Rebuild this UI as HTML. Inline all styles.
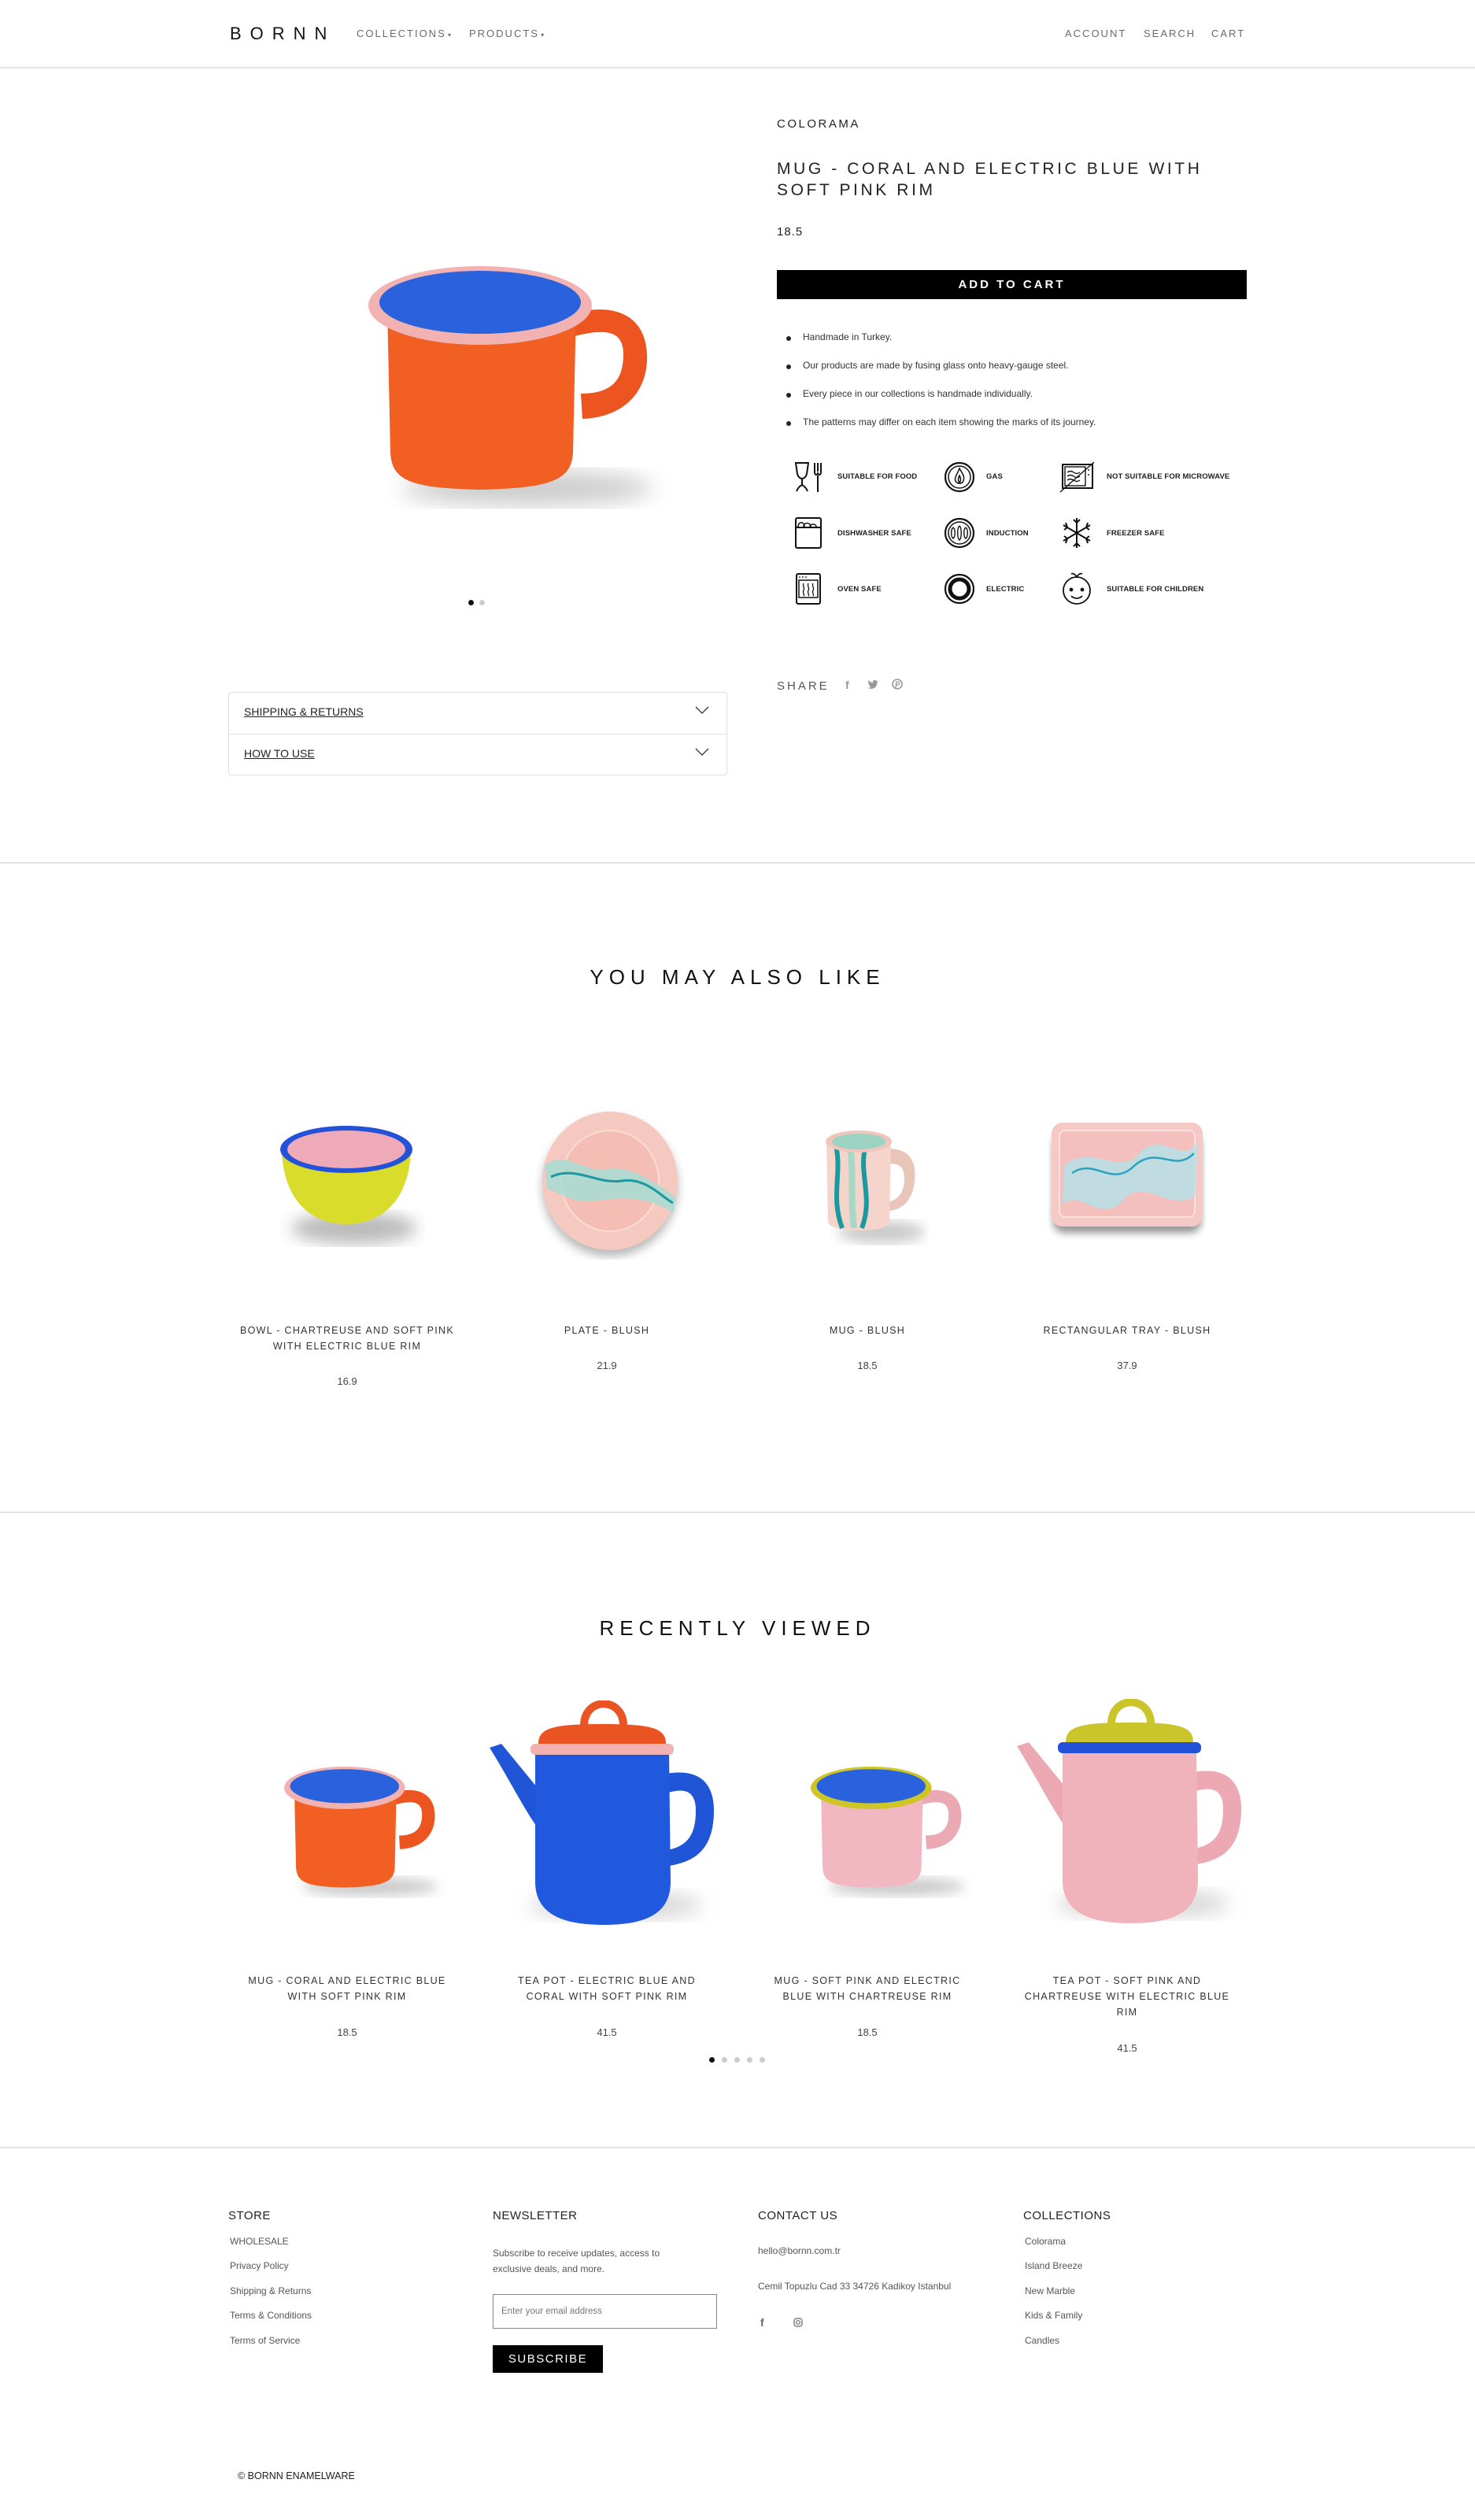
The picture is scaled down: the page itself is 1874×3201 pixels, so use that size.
<!DOCTYPE html>
<html><head><meta charset="utf-8">
<style>
*{margin:0;padding:0;box-sizing:border-box}
body{width:1874px;height:3201px;position:relative;background:#fff;font-family:"Liberation Sans",sans-serif;color:#1c1b1b;overflow:hidden}
.a{position:absolute}
.hd{font-size:13px;letter-spacing:2px;color:#6a6a6a}
.hr{position:absolute;left:0;width:1874px;height:2px;background:#e3e3e3}
.pt{position:absolute;font-size:12.5px;letter-spacing:1.3px;color:#333;text-align:center;line-height:20px}
.pp{position:absolute;font-size:13px;color:#444;text-align:center}
.fh{position:absolute;font-size:15px;color:#222;letter-spacing:.5px}
.fl{position:absolute;font-size:12px;color:#555}
.ic{position:absolute;font-size:9.5px;color:#222;font-weight:bold;letter-spacing:.1px}
.bl{position:absolute;font-size:12px;color:#333}
.bl:before{content:"";position:absolute;left:-21px;top:6px;width:6px;height:6px;border-radius:50%;background:#222}
</style></head><body>

<div class="a" style="left:292px;top:30px;font-size:22px;letter-spacing:11px;color:#111">BORNN</div>
<div class="a hd" style="left:453px;top:35px">COLLECTIONS<span style="font-size:8px;letter-spacing:0"> ▾</span></div>
<div class="a hd" style="left:596px;top:35px">PRODUCTS<span style="font-size:8px;letter-spacing:0"> ▾</span></div>
<div class="a hd" style="left:1353px;top:35px">ACCOUNT</div>
<div class="a hd" style="left:1453px;top:35px">SEARCH</div>
<div class="a hd" style="left:1539px;top:35px">CART</div>
<div class="hr" style="top:85px"></div>

<svg class="a" style="left:420px;top:320px" width="440" height="380" viewBox="0 0 440 380">
 <defs><filter id="bl"><feGaussianBlur stdDeviation="14"/></filter></defs>
 <ellipse cx="250" cy="300" rx="160" ry="22" fill="#999" opacity=".5" filter="url(#bl)"/>
 <path d="M300 80 C360 62 400 80 402 130 C404 175 375 210 320 212 L318 180 C360 180 372 160 372 130 C372 100 350 95 300 110Z" fill="#ec5420"/>
 <path d="M72 70 L312 70 L308 255 C306 290 280 300 190 302 C100 300 78 290 76 255Z" fill="#f15f22"/>
 <ellipse cx="190" cy="68" rx="142" ry="50" fill="#f3b2b2"/>
 <ellipse cx="190" cy="64" rx="128" ry="40" fill="#2a62dd"/>
</svg>
<div class="a" style="left:595px;top:762px;width:7px;height:7px;border-radius:50%;background:#111"></div>
<div class="a" style="left:609px;top:762px;width:7px;height:7px;border-radius:50%;background:#ccc"></div>

<div class="a" style="left:290px;top:879px;width:634px;height:106px;border:1px solid #e0e0e0;border-radius:4px"></div>
<div class="a" style="left:290px;top:932px;width:634px;height:1px;background:#e0e0e0"></div>
<div class="a" style="left:310px;top:896px;font-size:14px;text-decoration:underline;color:#222">SHIPPING &amp; RETURNS</div>
<div class="a" style="left:310px;top:949px;font-size:14px;text-decoration:underline;color:#222">HOW TO USE</div>
<svg class="a" style="left:883px;top:897px" width="18" height="10"><path d="M1 1 L9 9 L17 1" stroke="#333" fill="none" stroke-width="1.3"/></svg>
<svg class="a" style="left:883px;top:950px" width="18" height="10"><path d="M1 1 L9 9 L17 1" stroke="#333" fill="none" stroke-width="1.3"/></svg>

<div class="a" style="left:987px;top:149px;font-size:15px;letter-spacing:2.5px;color:#222">COLORAMA</div>
<div class="a" style="left:987px;top:201px;font-size:21px;letter-spacing:3.6px;line-height:27px;color:#222">MUG - CORAL AND ELECTRIC BLUE WITH<br>SOFT PINK RIM</div>
<div class="a" style="left:987px;top:286px;font-size:15px;letter-spacing:1px;color:#222">18.5</div>
<div class="a" style="left:987px;top:343px;width:597px;height:37px;background:#000;color:#fff;font-size:15px;letter-spacing:3px;text-align:center;line-height:37px;font-weight:bold">ADD TO CART</div>
<div class="bl" style="left:1020px;top:421px">Handmade in Turkey.</div>
<div class="bl" style="left:1020px;top:457px">Our products are made by fusing glass onto heavy-gauge steel.</div>
<div class="bl" style="left:1020px;top:493px">Every piece in our collections is handmade individually.</div>
<div class="bl" style="left:1020px;top:529px">The patterns may differ on each item showing the marks of its journey.</div>

<svg class="a" style="left:1008px;top:586px" width="42" height="40" viewBox="0 0 42 40" fill="none" stroke="#111" stroke-width="2"><path d="M3 2 H19 L17 16 C16 20 13 22 11 22 C9 22 6 20 5 16Z M11 22 V30 M4 38 C6 33 9 31 11 30 C13 31 16 33 18 38"/><path d="M27 2 V14 C27 18 31 18 31 14 M31 2 V13 M35 2 V14 C35 18 31 18 31 14 M31 18 V39"/></svg>
<div class="ic" style="left:1064px;top:600px">SUITABLE FOR FOOD</div>
<svg class="a" style="left:1199px;top:586px" width="40" height="40" viewBox="0 0 40 40" fill="none" stroke="#111" stroke-width="2.2"><circle cx="20" cy="20" r="18"/><circle cx="20" cy="20" r="14" stroke-width="1.5"/><path d="M20 9 C24 16 27 19 25 25 C23 29 17 29 15 25 C13 21 17 17 20 9Z M20 18 C22 22 22 25 20 27 C18 25 18 22 20 18Z" stroke-width="1.5"/></svg>
<div class="ic" style="left:1253px;top:600px">GAS</div>
<svg class="a" style="left:1346px;top:586px" width="46" height="40" viewBox="0 0 46 40" fill="none" stroke="#111" stroke-width="2"><rect x="4" y="4" width="38" height="30"/><rect x="7" y="7" width="26" height="24" stroke-width="1.4"/><path d="M10 14 q4 -3 8 0 t8 0 M10 19 q4 -3 8 0 t8 0 M10 24 q4 -3 8 0 t8 0 M37 10 v2 M37 16 v2 M1 39 L44 1" stroke-width="1.4"/></svg>
<div class="ic" style="left:1406px;top:600px">NOT SUITABLE FOR MICROWAVE</div>

<svg class="a" style="left:1008px;top:656px" width="40" height="42" viewBox="0 0 40 42" fill="none" stroke="#111" stroke-width="2"><rect x="3" y="2" width="32" height="38" rx="2"/><path d="M3 14 H35"/><path d="M6 13 C6 6 14 6 14 13 M13 13 C13 7 22 7 22 13 M21 13 C21 9 29 9 29 13" stroke-width="1.5"/></svg>
<div class="ic" style="left:1064px;top:672px">DISHWASHER SAFE</div>
<svg class="a" style="left:1199px;top:656px" width="40" height="42" viewBox="0 0 40 42" fill="none" stroke="#111" stroke-width="2.2"><circle cx="20" cy="21" r="18"/><circle cx="20" cy="21" r="14" stroke-width="1.5"/><path d="M12 14 c-3 2 -3 12 0 14 c3 -2 3 -12 0 -14 M20 12 c-3 2 -3 16 0 18 c3 -2 3 -16 0 -18 M28 14 c-3 2 -3 12 0 14 c3 -2 3 -12 0 -14" stroke-width="1.4"/></svg>
<div class="ic" style="left:1253px;top:672px">INDUCTION</div>
<svg class="a" style="left:1348px;top:656px" width="40" height="42" viewBox="0 0 40 42" fill="none" stroke="#111" stroke-width="2"><path d="M20 2 V40 M3 11 L37 31 M3 31 L37 11 M16 4 L20 8 L24 4 M16 38 L20 34 L24 38 M4 17 L8 14 L6 8 M36 25 L32 28 L34 34 M4 25 L8 28 L6 34 M36 17 L32 14 L34 8"/></svg>
<div class="ic" style="left:1406px;top:672px">FREEZER SAFE</div>

<svg class="a" style="left:1008px;top:727px" width="40" height="42" viewBox="0 0 40 42" fill="none" stroke="#111" stroke-width="2"><rect x="4" y="2" width="30" height="38" rx="2"/><rect x="7" y="10" width="24" height="22" stroke-width="1.5"/><path d="M7 6 h2 M11 6 h2 M15 6 h2 M13 14 c-2 3 2 6 0 9 c-2 3 2 5 0 7 M19 14 c-2 3 2 6 0 9 c-2 3 2 5 0 7 M25 14 c-2 3 2 6 0 9 c-2 3 2 5 0 7" stroke-width="1.3"/></svg>
<div class="ic" style="left:1064px;top:743px">OVEN SAFE</div>
<svg class="a" style="left:1199px;top:727px" width="40" height="42" viewBox="0 0 40 42"><circle cx="20" cy="21" r="18" fill="none" stroke="#111" stroke-width="2.2"/><circle cx="20" cy="21" r="12" fill="none" stroke="#111" stroke-width="5"/><circle cx="20" cy="21" r="6" fill="#fff"/></svg>
<div class="ic" style="left:1253px;top:743px">ELECTRIC</div>
<svg class="a" style="left:1346px;top:724px" width="44" height="46" viewBox="0 0 44 46" fill="none" stroke="#111" stroke-width="1.8"><circle cx="22" cy="26" r="17"/><path d="M22 9 C20 5 17 4 15 5 M22 9 C24 5 27 4 29 5 M15 33 C19 37 25 37 29 33"/><circle cx="15" cy="25" r="1.5" fill="#111"/><circle cx="29" cy="25" r="1.5" fill="#111"/></svg>
<div class="ic" style="left:1406px;top:743px">SUITABLE FOR CHILDREN</div>

<div class="a" style="left:987px;top:863px;font-size:15px;letter-spacing:3px;color:#555">SHARE</div>
<div class="a" style="left:1074px;top:862px;font-size:14px;color:#999;font-weight:bold">f</div>
<svg class="a" style="left:1102px;top:864px" width="14" height="12" viewBox="0 0 24 20"><path d="M23 2 c-1 1 -2 1 -3 1 c1 -1 2 -2 2 -3 c-1 1 -2 1 -3 1 c-3 -3 -8 -1 -7 4 c-4 0 -7 -2 -10 -5 c-1 3 0 5 2 7 c-1 0 -2 0 -2 -1 c0 3 2 5 4 5 c-1 0 -2 0 -2 0 c1 2 2 3 4 3 c-2 2 -5 3 -8 2 c10 6 22 0 21 -11 c1 -1 2 -2 2 -3z" fill="#999"/></svg>
<svg class="a" style="left:1133px;top:862px" width="14" height="14" viewBox="0 0 14 14"><circle cx="7" cy="7" r="6" fill="none" stroke="#999" stroke-width="1.6"/><path d="M6 4 L5 12" stroke="#999" stroke-width="1.4"/><circle cx="7.5" cy="6" r="2" fill="none" stroke="#999" stroke-width="1.3"/></svg>

<div class="hr" style="top:1095px"></div>

<div class="a" style="left:0;width:1874px;top:1226px;text-align:center;font-size:26px;letter-spacing:7px;color:#111">YOU MAY ALSO LIKE</div>

<svg class="a" style="left:340px;top:1420px" width="200" height="180" viewBox="0 0 200 180">
 <defs><filter id="b2"><feGaussianBlur stdDeviation="10"/></filter></defs>
 <ellipse cx="110" cy="140" rx="80" ry="20" fill="#777" opacity=".5" filter="url(#b2)"/>
 <path d="M18 40 C20 110 60 135 100 135 C140 135 180 110 182 40Z" fill="#d9dc2a"/>
 <ellipse cx="100" cy="40" rx="84" ry="30" fill="#2352d8"/>
 <ellipse cx="100" cy="40" rx="75" ry="24" fill="#eeaab8"/>
</svg>
<svg class="a" style="left:680px;top:1400px" width="190" height="200" viewBox="0 0 190 200">
 <defs><filter id="b3"><feGaussianBlur stdDeviation="6"/></filter></defs>
 <ellipse cx="95" cy="108" rx="86" ry="88" fill="#888" opacity=".6" filter="url(#b3)"/>
 <ellipse cx="95" cy="100" rx="86" ry="88" fill="#f6c9c0"/>
 <ellipse cx="95" cy="100" rx="62" ry="64" fill="#f4beb4" stroke="#f9ddd5" stroke-width="2"/>
 <path d="M12 80 C40 60 60 90 90 85 C120 80 150 100 178 120 L176 140 C140 120 110 120 80 125 C50 130 30 115 15 110Z" fill="#a6ddd4" opacity=".85"/>
 <path d="M20 95 C50 80 80 105 110 100 C140 95 160 120 175 128" stroke="#1a9aa0" stroke-width="3" fill="none"/>
</svg>
<svg class="a" style="left:1040px;top:1430px" width="140" height="160" viewBox="0 0 140 160">
 <defs><filter id="b4"><feGaussianBlur stdDeviation="8"/></filter></defs>
 <ellipse cx="80" cy="135" rx="55" ry="14" fill="#888" opacity=".45" filter="url(#b4)"/>
 <path d="M80 30 C115 25 125 45 122 70 C120 95 105 108 88 108 L88 96 C100 96 108 85 109 70 C110 50 100 45 80 50Z" fill="#e9c4b9"/>
 <path d="M10 20 L92 20 L90 122 C88 130 70 133 50 133 C30 133 14 130 12 122Z" fill="#f4d4cb"/>
 <path d="M22 25 C30 60 15 90 30 130 M60 25 C50 60 70 90 55 130" stroke="#1a9aa0" stroke-width="6" fill="none"/>
 <path d="M40 25 C45 60 40 90 45 130" stroke="#a7d8c6" stroke-width="8" fill="none"/>
 <ellipse cx="51" cy="20" rx="42" ry="14" fill="#f0c6bc"/>
 <ellipse cx="51" cy="20" rx="34" ry="10" fill="#9dd3c2"/>
</svg>
<svg class="a" style="left:1332px;top:1420px" width="200" height="160" viewBox="0 0 200 160">
 <defs><filter id="b5"><feGaussianBlur stdDeviation="5"/></filter></defs>
 <rect x="6" y="20" width="188" height="126" rx="14" fill="#666" opacity=".7" filter="url(#b5)"/>
 <rect x="4" y="6" width="192" height="132" rx="14" fill="#f5c9c6"/>
 <rect x="14" y="16" width="172" height="110" rx="8" fill="#f3c0bd" stroke="#fbe0dc" stroke-width="2"/>
 <path d="M20 60 C60 30 90 80 120 40 C150 20 170 60 190 30 L186 100 C150 120 120 70 90 110 C60 130 40 90 18 110Z" fill="#b6e1e6" opacity=".85"/>
 <path d="M30 70 C60 50 80 90 110 60 C140 35 160 70 185 45" stroke="#2aa2c0" stroke-width="2.5" fill="none"/>
</svg>

<div class="pt" style="left:286px;width:310px;top:1680px">BOWL - CHARTREUSE AND SOFT PINK<br>WITH ELECTRIC BLUE RIM</div>
<div class="pp" style="left:286px;width:310px;top:1747px">16.9</div>
<div class="pt" style="left:616px;width:310px;top:1680px">PLATE - BLUSH</div>
<div class="pp" style="left:616px;width:310px;top:1727px">21.9</div>
<div class="pt" style="left:947px;width:310px;top:1680px">MUG - BLUSH</div>
<div class="pp" style="left:947px;width:310px;top:1727px">18.5</div>
<div class="pt" style="left:1277px;width:310px;top:1680px">RECTANGULAR TRAY - BLUSH</div>
<div class="pp" style="left:1277px;width:310px;top:1727px">37.9</div>

<div class="hr" style="top:1920px"></div>

<div class="a" style="left:0;width:1874px;top:2053px;text-align:center;font-size:26px;letter-spacing:7px;color:#111">RECENTLY VIEWED</div>

<svg class="a" style="left:335px;top:2234px" width="238" height="206" viewBox="0 0 440 380">
 <ellipse cx="250" cy="300" rx="160" ry="22" fill="#999" opacity=".5" filter="url(#bl)"/>
 <path d="M300 80 C360 62 400 80 402 130 C404 175 375 210 320 212 L318 180 C360 180 372 160 372 130 C372 100 350 95 300 110Z" fill="#ec5420"/>
 <path d="M72 70 L312 70 L308 255 C306 290 280 300 190 302 C100 300 78 290 76 255Z" fill="#f15f22"/>
 <ellipse cx="190" cy="68" rx="142" ry="50" fill="#f3b2b2"/>
 <ellipse cx="190" cy="64" rx="128" ry="40" fill="#2a62dd"/>
</svg>
<svg class="a" style="left:622px;top:2160px" width="300" height="290" viewBox="0 0 300 290">
 <defs><filter id="b6"><feGaussianBlur stdDeviation="12"/></filter></defs>
 <ellipse cx="160" cy="260" rx="110" ry="18" fill="#999" opacity=".4" filter="url(#b6)"/>
 <path d="M0 60 L15 55 L60 110 L60 160 C45 140 25 100 0 60Z" fill="#1f55d6"/>
 <path d="M215 95 C255 85 285 95 285 140 C285 190 260 205 228 210 L226 190 C252 185 262 170 262 140 C262 112 245 110 218 120Z" fill="#1f55d6"/>
 <path d="M58 65 L228 65 L230 230 C230 270 200 285 145 285 C90 285 58 270 58 230Z" fill="#2059dd"/>
 <rect x="52" y="55" width="182" height="14" rx="6" fill="#f3b2b2"/>
 <path d="M62 55 C62 35 80 30 143 30 C206 30 224 35 224 55Z" fill="#ea5423"/>
 <path d="M120 32 C120 -5 170 -5 170 32" stroke="#ea5423" stroke-width="10" fill="none"/>
</svg>
<svg class="a" style="left:1004px;top:2234px" width="238" height="206" viewBox="0 0 440 380">
 <ellipse cx="250" cy="300" rx="160" ry="22" fill="#999" opacity=".5" filter="url(#bl)"/>
 <path d="M300 80 C360 62 400 80 402 130 C404 175 375 210 320 212 L318 180 C360 180 372 160 372 130 C372 100 350 95 300 110Z" fill="#eaa9b3"/>
 <path d="M72 70 L312 70 L308 255 C306 290 280 300 190 302 C100 300 78 290 76 255Z" fill="#f1b8c1"/>
 <ellipse cx="190" cy="68" rx="142" ry="50" fill="#cdc626"/>
 <ellipse cx="190" cy="64" rx="128" ry="40" fill="#2a62dd"/>
</svg>
<svg class="a" style="left:1292px;top:2158px" width="300" height="290" viewBox="0 0 300 290">
 <ellipse cx="160" cy="260" rx="110" ry="18" fill="#999" opacity=".4" filter="url(#b6)"/>
 <path d="M0 60 L15 55 L60 110 L60 160 C45 140 25 100 0 60Z" fill="#eca9b3"/>
 <path d="M215 95 C255 85 285 95 285 140 C285 190 260 205 228 210 L226 190 C252 185 262 170 262 140 C262 112 245 110 218 120Z" fill="#eca9b3"/>
 <path d="M58 65 L228 65 L230 230 C230 270 200 285 145 285 C90 285 58 270 58 230Z" fill="#f0b3bc"/>
 <rect x="52" y="55" width="182" height="14" rx="6" fill="#2352d8"/>
 <path d="M62 55 C62 35 80 30 143 30 C206 30 224 35 224 55Z" fill="#c9c52a"/>
 <path d="M120 32 C120 -5 170 -5 170 32" stroke="#c9c52a" stroke-width="10" fill="none"/>
</svg>

<div class="pt" style="left:286px;width:310px;top:2506px">MUG - CORAL AND ELECTRIC BLUE<br>WITH SOFT PINK RIM</div>
<div class="pp" style="left:286px;width:310px;top:2574px">18.5</div>
<div class="pt" style="left:616px;width:310px;top:2506px">TEA POT - ELECTRIC BLUE AND<br>CORAL WITH SOFT PINK RIM</div>
<div class="pp" style="left:616px;width:310px;top:2574px">41.5</div>
<div class="pt" style="left:947px;width:310px;top:2506px">MUG - SOFT PINK AND ELECTRIC<br>BLUE WITH CHARTREUSE RIM</div>
<div class="pp" style="left:947px;width:310px;top:2574px">18.5</div>
<div class="pt" style="left:1277px;width:310px;top:2506px">TEA POT - SOFT PINK AND<br>CHARTREUSE WITH ELECTRIC BLUE<br>RIM</div>
<div class="pp" style="left:1277px;width:310px;top:2594px">41.5</div>
<div class="a" style="left:901px;top:2613px;width:7px;height:7px;border-radius:50%;background:#111"></div>
<div class="a" style="left:917px;top:2613px;width:7px;height:7px;border-radius:50%;background:#ccc"></div>
<div class="a" style="left:933px;top:2613px;width:7px;height:7px;border-radius:50%;background:#ccc"></div>
<div class="a" style="left:949px;top:2613px;width:7px;height:7px;border-radius:50%;background:#ccc"></div>
<div class="a" style="left:965px;top:2613px;width:7px;height:7px;border-radius:50%;background:#ccc"></div>

<div class="hr" style="top:2727px"></div>

<div class="fh" style="left:290px;top:2806px">STORE</div>
<div class="fl" style="left:292px;top:2840px">WHOLESALE</div>
<div class="fl" style="left:292px;top:2871px">Privacy Policy</div>
<div class="fl" style="left:292px;top:2903px">Shipping &amp; Returns</div>
<div class="fl" style="left:292px;top:2934px">Terms &amp; Conditions</div>
<div class="fl" style="left:292px;top:2966px">Terms of Service</div>

<div class="fh" style="left:626px;top:2806px">NEWSLETTER</div>
<div class="fl" style="left:626px;top:2852px;line-height:20px">Subscribe to receive updates, access to<br>exclusive deals, and more.</div>
<div class="a" style="left:626px;top:2914px;width:285px;height:44px;border:1px solid #888"></div>
<div class="fl" style="left:637px;top:2930px;font-size:11.5px;color:#777">Enter your email address</div>
<div class="a" style="left:626px;top:2979px;width:140px;height:35px;background:#000;color:#fff;font-size:15px;letter-spacing:1.5px;text-align:center;line-height:35px">SUBSCRIBE</div>

<div class="fh" style="left:963px;top:2806px">CONTACT US</div>
<div class="fl" style="left:963px;top:2852px">hello@bornn.com.tr</div>
<div class="fl" style="left:963px;top:2897px">Cemil Topuzlu Cad 33 34726 Kadikoy Istanbul</div>
<div class="a" style="left:966px;top:2942px;font-size:14px;color:#666;font-weight:bold">f</div>
<svg class="a" style="left:1008px;top:2944px" width="12" height="12" viewBox="0 0 12 12"><rect x="1" y="1" width="10" height="10" rx="3" fill="none" stroke="#666" stroke-width="1.2"/><circle cx="6" cy="6" r="2.3" fill="none" stroke="#666" stroke-width="1.2"/></svg>

<div class="fh" style="left:1300px;top:2806px">COLLECTIONS</div>
<div class="fl" style="left:1302px;top:2840px">Colorama</div>
<div class="fl" style="left:1302px;top:2871px">Island Breeze</div>
<div class="fl" style="left:1302px;top:2903px">New Marble</div>
<div class="fl" style="left:1302px;top:2934px">Kids &amp; Family</div>
<div class="fl" style="left:1302px;top:2966px">Candles</div>

<div class="a" style="left:302px;top:3138px;font-size:12.5px;color:#222">© BORNN ENAMELWARE</div>
</body></html>
